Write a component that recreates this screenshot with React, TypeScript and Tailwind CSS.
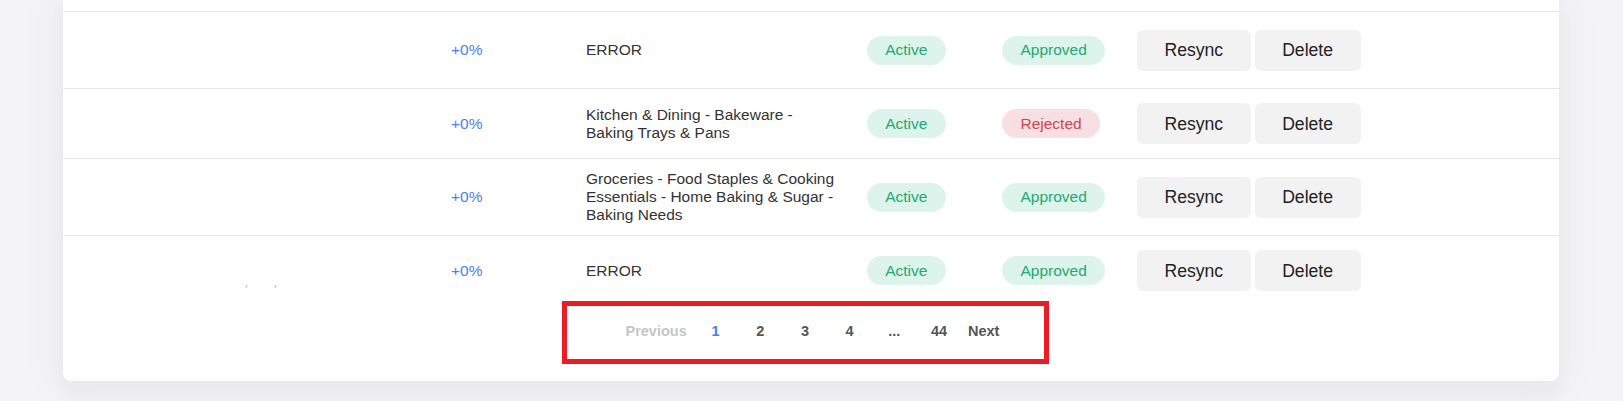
import React from 'react';

type Row = {
    category: string;
    status: 'Active';
    approval: 'Approved' | 'Rejected';
    height: string;
    marks?: boolean;
};

const rows: Row[] = [
    { category: 'ERROR', status: 'Active', approval: 'Approved', height: 'h-[77px]' },
    { category: 'Kitchen & Dining - Bakeware - Baking Trays & Pans', status: 'Active', approval: 'Rejected', height: 'h-[70px]' },
    {
        category: 'Groceries - Food Staples & Cooking Essentials - Home Baking & Sugar - Baking Needs',
        status: 'Active',
        approval: 'Approved',
        height: 'h-[77px]',
    },
    { category: 'ERROR', status: 'Active', approval: 'Approved', height: 'h-[70px]', marks: true },
];

const pages = ['1', '2', '3', '4', '...', '44'];

const Badge = ({ label }: { label: string }) => {
    const tone =
        label === 'Rejected'
            ? 'bg-[#f8e0e2] text-[#cf4651]'
            : 'bg-[#dcf4eb] text-[#25a872]';
    return (
        <span className={`inline-flex h-[29px] items-center rounded-full px-[18.5px] text-[15.5px] leading-[18px] ${tone}`}>
            {label}
        </span>
    );
};

const ActionButton = ({ label }: { label: string }) => (
    <button className="h-[41px] rounded-[6px] bg-[#f2f2f2] px-[27.5px] text-[17.6px] leading-[20px] text-[#222]">
        {label}
    </button>
);

const TableRow = ({ row }: { row: Row }) => (
    <div className={`flex items-center border-t border-[#e6e6e6] ${row.height}`}>
        <div className="h-full w-[388px] shrink-0">
            {row.marks && (
                <div className="flex gap-[28px] pl-[183px] pt-[49px]">
                    <span className="block h-[3px] w-[1px] skew-x-[-20deg] bg-[#a9b6f3]" />
                    <span className="block h-[3px] w-[1px] skew-x-[-20deg] bg-[#a9b6f3]" />
                </div>
            )}
        </div>
        <div className="w-[135px] shrink-0 text-[15.5px] leading-[17.8px] text-[#4a80f0]">+0%</div>
        <div className="w-[280.7px] shrink-0">
            <div className="w-[253px] text-[15.5px] leading-[17.8px] text-[#333]">{row.category}</div>
        </div>
        <div className="w-[135.3px] shrink-0">
            <Badge label={row.status} />
        </div>
        <div className="w-[135px] shrink-0">
            <Badge label={row.approval} />
        </div>
        <div className="flex gap-[4px]">
            <ActionButton label="Resync" />
            <ActionButton label="Delete" />
        </div>
    </div>
);

const Pagination = () => (
    <div className="relative flex justify-center pb-[41.7px] pt-[18px]">
        {/* red highlight box around the pager */}
        <div className="pointer-events-none absolute left-[499px] top-[-3.6px] h-[62.3px] w-[487px] border-[5px] border-[#ed1c24]" />
        <div className="ml-[3px] flex items-center text-[14.5px] font-bold leading-[16.7px]">
            <span className="min-w-[44.7px] px-[6.5px] text-center text-[#c6c6c6]">Previous</span>
            {pages.map((p) => (
                <span
                    key={p}
                    className={`min-w-[44.7px] px-[6.5px] text-center ${p === '1' ? 'text-[#3b82f6]' : 'text-[#555]'}`}
                >
                    {p}
                </span>
            ))}
            <span className="min-w-[44.7px] px-[6.5px] text-center text-[#555]">Next</span>
        </div>
    </div>
);

export default function App() {
    return (
        <div
            className="h-[401px] w-[1623px] overflow-hidden bg-[#f4f4f6]"
            style={{ fontFamily: '"Liberation Sans", Arial, sans-serif' }}
        >
            <div className="ml-[63px] w-[1496px] rounded-b-[8px] bg-white shadow-[0_0_40px_12px_rgba(0,0,0,0.03),0_14px_14px_4px_rgba(0,0,0,0.025)]">
                <div className="h-[11px]" />
                {rows.map((row, i) => (
                    <TableRow key={i} row={row} />
                ))}
                <Pagination />
            </div>
        </div>
    );
}
